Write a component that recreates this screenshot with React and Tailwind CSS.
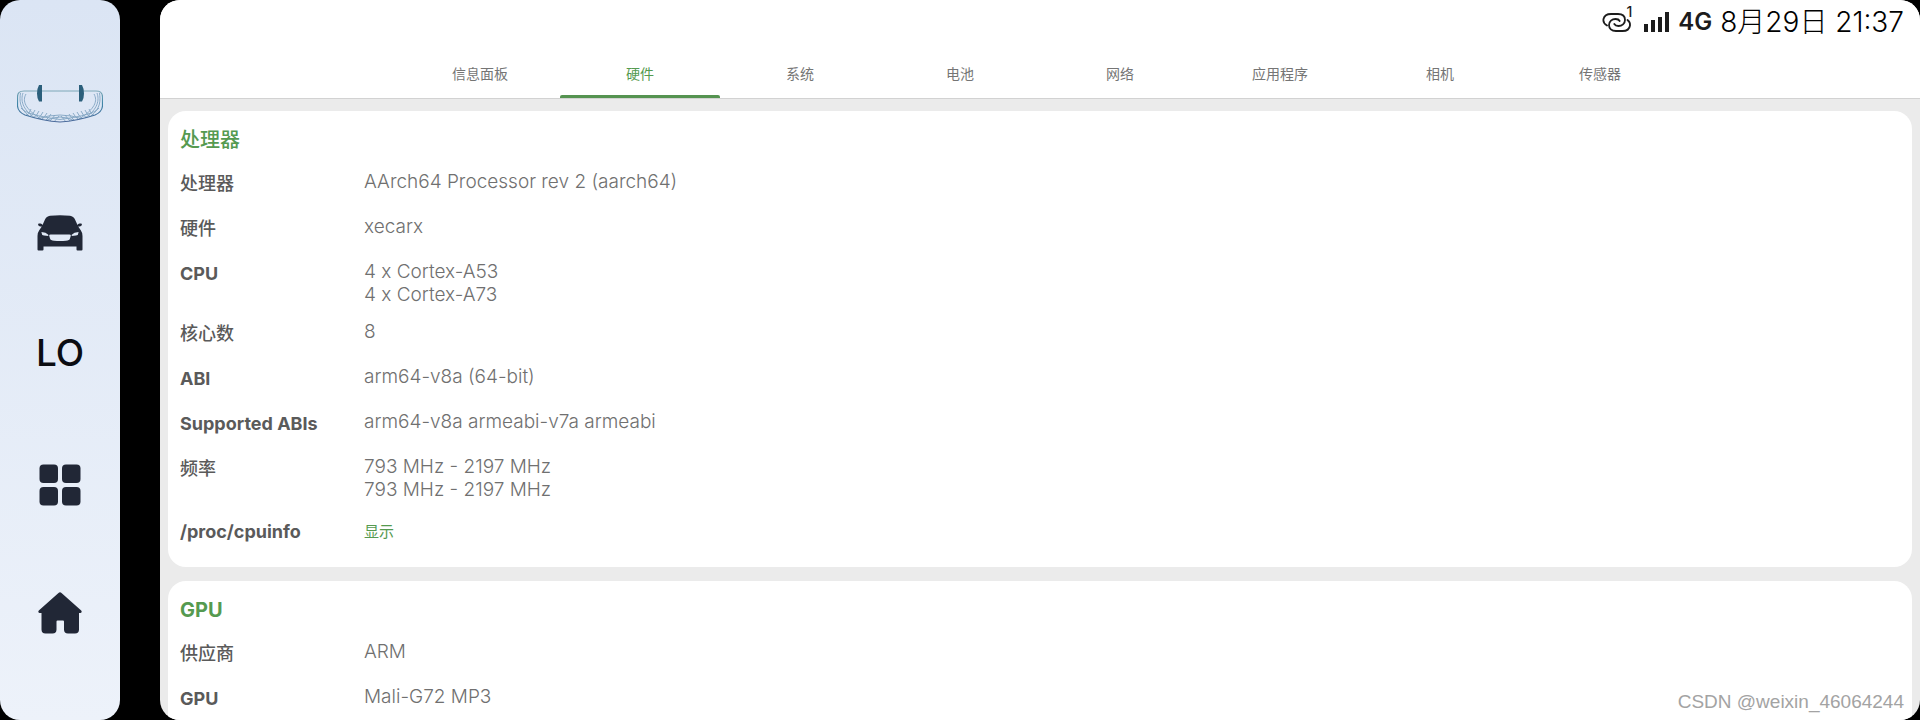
import React, { useState } from "react";

const LATIN = "font-['Inter','Noto_Sans_CJK_SC',sans-serif]";

const tabs = ["信息面板", "硬件", "系统", "电池", "网络", "应用程序", "相机", "传感器"];

const cards = [
  {
    title: "处理器",
    rows: [
      { label: "处理器", values: ["AArch64 Processor rev 2 (aarch64)"] },
      { label: "硬件", values: ["xecarx"] },
      { label: "CPU", values: ["4 x Cortex-A53", "4 x Cortex-A73"] },
      { label: "核心数", values: ["8"] },
      { label: "ABI", values: ["arm64-v8a (64-bit)"] },
      { label: "Supported ABIs", values: ["arm64-v8a armeabi-v7a armeabi"] },
      { label: "频率", values: ["793 MHz - 2197 MHz", "793 MHz - 2197 MHz"] },
      { label: "/proc/cpuinfo", action: "显示" },
    ],
  },
  {
    title: "GPU",
    rows: [
      { label: "供应商", values: ["ARM"] },
      { label: "GPU", values: ["Mali-G72 MP3"] },
    ],
  },
];

// Latin labels are drawn bolder than Chinese ones
const labelWeight = (text) => (/^[\x00-\x7f]+$/.test(text) ? "font-bold" : "font-medium");

const BODY = "M7 7H79Q85.500 7 85.500 13V22Q85 28 78 31Q60 37 43 38Q26 37 8 31Q1 28 .5 22V13Q.5 7 7 7Z";

const GlassIcon = () => (
  <svg width="86" height="40" viewBox="0 0 86 40" fill="none">
    <defs>
      <linearGradient id="rim" x1="0" y1="0" x2="0" y2="1">
        <stop offset="0" stopColor="#7fa9b8" />
        <stop offset="0.4" stopColor="#3f86a8" />
        <stop offset="1" stopColor="#4d6b9c" />
      </linearGradient>
      <clipPath id="body">
        <path d={BODY} />
      </clipPath>
    </defs>
    <g clipPath="url(#body)" stroke="#4f80a6" strokeWidth="0.9" opacity="0.65">
      <path d="M3.500 9C2.500 16 2 24 12 32M6 9C3.500 16 5 25 18 34M9 10C5 17 8 25 24 35" />
      <path d="M82.500 9C83.500 16 84 24 74 32M80 9C82.500 16 81 25 68 34M77 10C81 17 78 25 62 35" />
      {[0, 1, 2, 3, 4, 5, 6, 7].map((i) => (
        <path
          key={i}
          d={`M${8 + i * 4} ${32 + i}Q${12 + i * 4} ${31 + i / 2} ${14 + i * 4} ${25 + i}M${78 - i * 4} ${32 + i}Q${74 - i * 4} ${31 + i / 2} ${72 - i * 4} ${25 + i}`}
        />
      ))}
      <path d="M4 24Q9 31 43 35.500Q77 31 82 24M28 37Q43 29 58 37M20 35Q43 27 66 35" />
    </g>
    <path d={BODY} stroke="url(#rim)" strokeWidth="1.200" />
    <path d="M25 1H22Q20 4.500 20 9.500T22 17.500H25ZM62 1H65Q67 4.500 67 9.500T65 17.500H62Z" fill="#2b5f7b" />
  </svg>
);

const CarIcon = () => (
  <svg width="46" height="36" viewBox="0 0 46 36" fill="#212736">
    <path
      fillRule="evenodd"
      d="M13 .8Q23-.5 33 .8Q36.500 1.200 38 4.500L40.500 10Q41 8.500 42.500 8.500H44Q45 8.600 44.900 9.800Q44.600 11.500 42.500 11.500H41.200L43.600 15Q45.500 17.500 45.500 21V34.500Q45.500 35.500 44.500 35.500H40.500Q39.500 35.500 39.500 34.500V31.500H6.500V34.500Q6.500 35.500 5.500 35.500H1.500Q.5 35.500 .5 34.500V21Q.5 17.500 2.400 15L4.800 11.500H3.500Q1.400 11.500 1.100 9.800Q1 8.600 2 8.500H3.500Q5 8.500 5.500 10L8 4.500Q9.500 1.200 13 .8ZM4.500 17Q4.300 20 7 20.400L11.300 21V19.700Q9 17.300 4.500 17ZM41.500 17Q41.700 20 39 20.400L34.700 21V19.700Q37 17.300 41.500 17ZM13.500 19.500H32.500Q34 19.500 33.800 20.700L33 23.500Q32.500 25.500 29 25.800Q23 26.300 17 25.800Q13.500 25.500 13 23.500L12.200 20.700Q12 19.500 13.500 19.500Z"
    />
  </svg>
);

const GridIcon = () => (
  <svg width="42" height="42" viewBox="0 0 42 42" fill="#212736">
    <rect x="0.500" y="0.500" width="18.500" height="18.500" rx="4" />
    <rect x="23" y="0.500" width="18.500" height="18.500" rx="4" />
    <rect x="0.500" y="23" width="18.500" height="18.500" rx="4" />
    <rect x="23" y="23" width="18.500" height="18.500" rx="4" />
  </svg>
);

const HomeIcon = () => (
  <svg width="44" height="42" viewBox="0 0 44 42" fill="#212736">
    <path d="M20.500 1Q22-.3 23.500 1L43.200 18.500Q44.500 20.500 42.500 21H41V37.500Q41 41.500 37 41.500H30Q26 41.500 26 37.500V29.500Q26 28.500 25 28.500H19.500Q18.500 28.500 18.500 29.500V37.500Q18.500 41.500 14.500 41.500H7.500Q3.500 41.500 3.500 37.500V21H1.500Q-.5 20.500 .8 18.500Z" />
  </svg>
);

const LinkIcon = () => (
  <svg width="30" height="24" viewBox="0 0 30 24" fill="none" stroke="#1c1c1c" strokeWidth="1.800" strokeLinecap="round">
    <path d="M5 15.500C2.500 14 1 11.500 1.500 9C2.300 5.500 5 4 9 4H16C20.500 4 23 6.500 23 10C23 13.500 20 16 16.500 16C14.500 16 13 15.300 12.300 14" />
    <path d="M25.500 10C27.500 11.500 28.300 13 28 15.500C27.500 19 24.500 21 20.500 21H14C9.500 21 7 18.500 7 15C7 11.500 10 9 13.500 9C15.500 9 17 9.700 17.700 11" />
  </svg>
);

const SignalIcon = () => (
  <svg width="26" height="20" viewBox="0 0 26 20" fill="#1c1c1c">
    <rect x="0" y="12" width="4" height="8" />
    <rect x="7" y="8" width="4" height="12" />
    <rect x="14" y="5" width="4" height="15" />
    <rect x="21" y="0" width="4" height="20" />
  </svg>
);

const navItems = [
  { name: "AR", icon: <GlassIcon />, margin: "mt-[78px]" },
  { name: "Car", icon: <CarIcon />, margin: "mt-[77px]" },
  { name: "LO", icon: <span className="text-[37px] leading-[52px] font-medium">LO</span>, margin: "mt-[68px]" },
  { name: "Apps", icon: <GridIcon />, margin: "mt-20" },
  { name: "Home", icon: <HomeIcon />, margin: "mt-[76px]" },
];

const Sidebar = () => (
  <nav className="flex w-[120px] shrink-0 flex-col items-center rounded-[20px] bg-linear-to-b from-[#dbe5f4] to-[#edf2fa]">
    {navItems.map((item) => (
      <button
        key={item.name}
        aria-label={item.name}
        className={`flex h-[52px] w-full shrink-0 items-center justify-center text-[#0b0d12] ${item.margin}`}
      >
        {item.icon}
      </button>
    ))}
  </nav>
);

const StatusBar = () => (
  <div className="flex h-12 shrink-0 items-center justify-end pr-4 pb-1 text-[#1c1c1c]">
    <div className="relative mr-3">
      <LinkIcon />
      <span className="absolute -top-1 right-0 text-[14px] leading-3 font-medium">1</span>
    </div>
    <SignalIcon />
    <span className="ml-2 text-[24px] font-semibold">4G</span>
    <span className="ml-2 text-[28px] font-light text-black">8月29日 21:37</span>
  </div>
);

const InfoCard = ({ title, rows }) => (
  <section className="rounded-[18px] bg-white px-3 pt-[13px] pb-4">
    <h2 className={`text-[20px] leading-8 text-[#559a50] ${labelWeight(title)}`}>{title}</h2>
    <dl className="mt-3">
      {rows.map((row) => (
        <div
          key={row.label}
          className={row.action ? "flex items-center" : "flex min-h-[45px] items-start pt-[2px] pb-3"}
        >
          <dt className={`w-[184px] shrink-0 text-[18px] leading-[28px] text-[#5a5a5a] ${labelWeight(row.label)}`}>
            {row.label}
          </dt>
          <dd className="text-[19px] leading-[23px] font-light text-[#707070]">
            {row.values?.map((value, i) => (
              <p key={i}>{value}</p>
            ))}
            {row.action && (
              <button className="block text-[15px] leading-[38px] font-normal text-[#559a50]">{row.action}</button>
            )}
          </dd>
        </div>
      ))}
    </dl>
  </section>
);

export default function App() {
  const [active, setActive] = useState("硬件");

  return (
    <div className={`relative flex h-screen gap-10 overflow-hidden bg-black ${LATIN}`}>
      <Sidebar />

      <main className="flex min-w-0 flex-1 flex-col overflow-hidden rounded-[20px] bg-[#ebebeb]">
        <header className="border-b border-[#d2d2d2] bg-white">
          <StatusBar />
          <div role="tablist" className="flex justify-center">
            {tabs.map((tab) => (
              <button
                key={tab}
                role="tab"
                aria-selected={tab === active}
                onClick={() => setActive(tab)}
                className={`flex h-[50px] w-40 flex-col items-center justify-between pt-4 text-[14px] leading-5 ${
                  tab === active ? "text-[#559a50]" : "text-[#757575]"
                }`}
              >
                {tab}
                {tab === active && <span className="h-[3px] w-full rounded-t-[2px] bg-[#559350]" />}
              </button>
            ))}
          </div>
        </header>

        {/* Cards */}
        <div className="flex flex-1 flex-col gap-[14px] overflow-y-auto px-2 pt-3 [scrollbar-width:none]">
          {cards.map((card) => (
            <InfoCard key={card.title} {...card} />
          ))}
        </div>
      </main>

      <p className="absolute right-4 bottom-[6px] font-['Liberation_Sans',sans-serif] text-[19px] leading-6 text-[#a3a3a3]">
        CSDN @weixin_46064244
      </p>
    </div>
  );
}
